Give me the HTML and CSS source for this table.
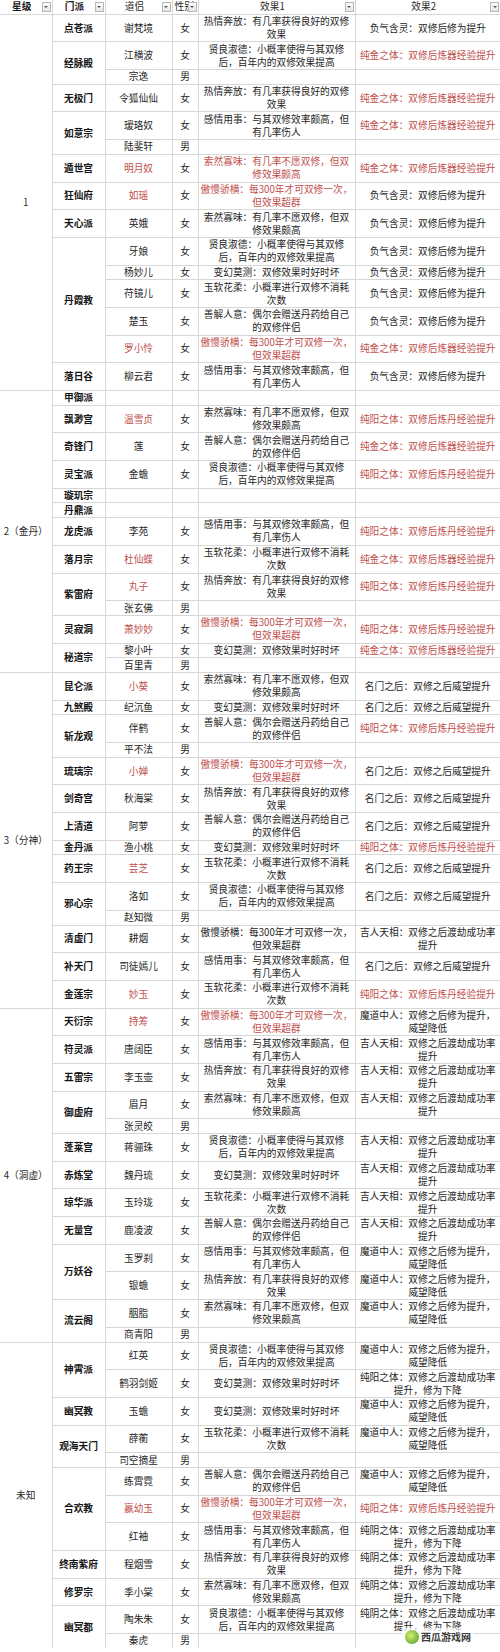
FILE: index.html
```html
<!DOCTYPE html>
<html lang="zh-CN">
<head>
<meta charset="utf-8">
<title>道侣表</title>
<link rel="stylesheet" href="styles.css">
</head>
<body>
<table class="sheet">
<colgroup><col class="c1"><col class="c2"><col class="c3"><col class="c4"><col class="c5"><col class="c6"></colgroup>
<thead>
<tr><th class="b">星级<span class="flt"></span></th><th class="b">门派<span class="flt"></span></th><th>道侣<span class="flt"></span></th><th class="lft">性别<span class="flt"></span></th><th>效果1<span class="flt"></span></th><th>效果2<span class="flt"></span></th></tr>
</thead>
<tbody>
<tr><td class="t" rowspan="15">1</td><td class="s">点苍派</td><td>谢梵境</td><td>女</td><td>热情奔放：有几率获得良好的双修<br>效果</td><td>负气含灵：双修后修为提升</td></tr>
<tr><td class="s" rowspan="2">经脉殿</td><td>江横波</td><td>女</td><td>贤良淑德：小概率使得与其双修<br>后，百年内的双修效果提高</td><td class="r">纯金之体：双修后炼器经验提升</td></tr>
<tr><td>宗逸</td><td>男</td><td></td><td></td></tr>
<tr><td class="s">无极门</td><td>令狐仙仙</td><td>女</td><td>热情奔放：有几率获得良好的双修<br>效果</td><td class="r">纯金之体：双修后炼器经验提升</td></tr>
<tr><td class="s" rowspan="2">如意宗</td><td>瑷珞奴</td><td>女</td><td>感情用事：与其双修效率颇高，但<br>有几率伤人</td><td class="r">纯金之体：双修后炼器经验提升</td></tr>
<tr><td>陆斐轩</td><td>男</td><td></td><td></td></tr>
<tr><td class="s">遁世宫</td><td class="r">明月奴</td><td>女</td><td class="r">索然寡味：有几率不愿双修，但双<br>修效果颇高</td><td class="r">纯金之体：双修后炼器经验提升</td></tr>
<tr><td class="s">狂仙府</td><td class="r">如瑶</td><td>女</td><td class="r">傲慢骄横：每300年才可双修一次，<br>但效果超群</td><td>负气含灵：双修后修为提升</td></tr>
<tr><td class="s">天心派</td><td>英娥</td><td>女</td><td>索然寡味：有几率不愿双修，但双<br>修效果颇高</td><td>负气含灵：双修后修为提升</td></tr>
<tr><td class="s" rowspan="5">丹霞教</td><td>牙娘</td><td>女</td><td>贤良淑德：小概率使得与其双修<br>后，百年内的双修效果提高</td><td>负气含灵：双修后修为提升</td></tr>
<tr><td>杨妙儿</td><td>女</td><td>变幻莫测：双修效果时好时坏</td><td>负气含灵：双修后修为提升</td></tr>
<tr><td>苻镜儿</td><td>女</td><td>玉软花柔：小概率进行双修不消耗<br>次数</td><td>负气含灵：双修后修为提升</td></tr>
<tr><td>楚玉</td><td>女</td><td>善解人意：偶尔会赠送丹药给自己<br>的双修伴侣</td><td>负气含灵：双修后修为提升</td></tr>
<tr><td class="r">罗小怜</td><td>女</td><td class="r">傲慢骄横：每300年才可双修一次，<br>但效果超群</td><td class="r">纯金之体：双修后炼器经验提升</td></tr>
<tr><td class="s">落日谷</td><td>柳云君</td><td>女</td><td>感情用事：与其双修效率颇高，但<br>有几率伤人</td><td>负气含灵：双修后修为提升</td></tr>

<tr><td class="t" rowspan="13">2（金丹）</td><td class="s">甲御派</td><td></td><td></td><td></td><td></td></tr>
<tr><td class="s">飘渺宫</td><td class="r">温雪贞</td><td>女</td><td>索然寡味：有几率不愿双修，但双<br>修效果颇高</td><td class="r">纯阳之体：双修后炼丹经验提升</td></tr>
<tr><td class="s">奇锋门</td><td>莲</td><td>女</td><td>善解人意：偶尔会赠送丹药给自己<br>的双修伴侣</td><td class="r">纯金之体：双修后炼器经验提升</td></tr>
<tr><td class="s">灵宝派</td><td>金蟾</td><td>女</td><td>贤良淑德：小概率使得与其双修<br>后，百年内的双修效果提高</td><td class="r">纯阳之体：双修后炼丹经验提升</td></tr>
<tr><td class="s">璇玑宗</td><td></td><td></td><td></td><td></td></tr>
<tr><td class="s">丹鼎派</td><td></td><td></td><td></td><td></td></tr>
<tr><td class="s">龙虎派</td><td>李苑</td><td>女</td><td>感情用事：与其双修效率颇高，但<br>有几率伤人</td><td class="r">纯阳之体：双修后炼丹经验提升</td></tr>
<tr><td class="s">落月宗</td><td class="r">杜仙蝶</td><td>女</td><td>玉软花柔：小概率进行双修不消耗<br>次数</td><td class="r">纯金之体：双修后炼器经验提升</td></tr>
<tr><td class="s" rowspan="2">紫雷府</td><td class="r">丸子</td><td>女</td><td>热情奔放：有几率获得良好的双修<br>效果</td><td class="r">纯阳之体：双修后炼丹经验提升</td></tr>
<tr><td>张玄佛</td><td>男</td><td></td><td></td></tr>
<tr><td class="s">灵寂洞</td><td class="r">萧妙妙</td><td>女</td><td class="r">傲慢骄横：每300年才可双修一次，<br>但效果超群</td><td class="r">纯阳之体：双修后炼丹经验提升</td></tr>
<tr><td class="s" rowspan="2">秘道宗</td><td>黎小叶</td><td>女</td><td>变幻莫测：双修效果时好时坏</td><td class="r">纯金之体：双修后炼器经验提升</td></tr>
<tr><td>百里青</td><td>男</td><td></td><td></td></tr>

<tr><td class="t" rowspan="14">3（分神）</td><td class="s">昆仑派</td><td class="r">小葵</td><td>女</td><td>索然寡味：有几率不愿双修，但双<br>修效果颇高</td><td>名门之后：双修之后威望提升</td></tr>
<tr><td class="s">九煞殿</td><td>纪沉鱼</td><td>女</td><td>变幻莫测：双修效果时好时坏</td><td>名门之后：双修之后威望提升</td></tr>
<tr><td class="s" rowspan="2">斩龙观</td><td>伴鹤</td><td>女</td><td>善解人意：偶尔会赠送丹药给自己<br>的双修伴侣</td><td class="r">纯阳之体：双修后炼丹经验提升</td></tr>
<tr><td>平不法</td><td>男</td><td></td><td></td></tr>
<tr><td class="s">琉璃宗</td><td class="r">小婵</td><td>女</td><td class="r">傲慢骄横：每300年才可双修一次，<br>但效果超群</td><td>名门之后：双修之后威望提升</td></tr>
<tr><td class="s">剑奇宫</td><td>秋海棠</td><td>女</td><td>热情奔放：有几率获得良好的双修<br>效果</td><td>名门之后：双修之后威望提升</td></tr>
<tr><td class="s">上清道</td><td>阿萝</td><td>女</td><td>善解人意：偶尔会赠送丹药给自己<br>的双修伴侣</td><td>名门之后：双修之后威望提升</td></tr>
<tr><td class="s">金丹派</td><td>渔小桃</td><td>女</td><td>变幻莫测：双修效果时好时坏</td><td class="r">纯阳之体：双修后炼丹经验提升</td></tr>
<tr><td class="s">药王宗</td><td class="r">芸芝</td><td>女</td><td>玉软花柔：小概率进行双修不消耗<br>次数</td><td>名门之后：双修之后威望提升</td></tr>
<tr><td class="s" rowspan="2">邪心宗</td><td>洛如</td><td>女</td><td>贤良淑德：小概率使得与其双修<br>后，百年内的双修效果提高</td><td>名门之后：双修之后威望提升</td></tr>
<tr><td>赵知微</td><td>男</td><td></td><td></td></tr>
<tr><td class="s">清虚门</td><td>耕烟</td><td>女</td><td>傲慢骄横：每300年才可双修一次，<br>但效果超群</td><td>吉人天相：双修之后渡劫成功率<br>提升</td></tr>
<tr><td class="s">补天门</td><td>司徒嫣儿</td><td>女</td><td>感情用事：与其双修效率颇高，但<br>有几率伤人</td><td>名门之后：双修之后威望提升</td></tr>
<tr><td class="s">金莲宗</td><td class="r">妙玉</td><td>女</td><td>玉软花柔：小概率进行双修不消耗<br>次数</td><td class="r">纯阳之体：双修后炼丹经验提升</td></tr>

<tr><td class="t" rowspan="13">4（洞虚）</td><td class="s">天衍宗</td><td class="r">持筹</td><td>女</td><td class="r">傲慢骄横：每300年才可双修一次，<br>但效果超群</td><td>魔道中人：双修之后修为提升，<br>威望降低</td></tr>
<tr><td class="s">符灵派</td><td>唐阔臣</td><td>女</td><td>感情用事：与其双修效率颇高，但<br>有几率伤人</td><td>吉人天相：双修之后渡劫成功率<br>提升</td></tr>
<tr><td class="s">五雷宗</td><td>李玉壶</td><td>女</td><td>热情奔放：有几率获得良好的双修<br>效果</td><td>吉人天相：双修之后渡劫成功率<br>提升</td></tr>
<tr><td class="s" rowspan="2">御虚府</td><td>眉月</td><td>女</td><td>索然寡味：有几率不愿双修，但双<br>修效果颇高</td><td>吉人天相：双修之后渡劫成功率<br>提升</td></tr>
<tr><td>张灵皎</td><td>男</td><td></td><td></td></tr>
<tr><td class="s">蓬莱宫</td><td>蒋骊珠</td><td>女</td><td>贤良淑德：小概率使得与其双修<br>后，百年内的双修效果提高</td><td>吉人天相：双修之后渡劫成功率<br>提升</td></tr>
<tr><td class="s">赤炼堂</td><td>魏丹琉</td><td>女</td><td>变幻莫测：双修效果时好时坏</td><td>吉人天相：双修之后渡劫成功率<br>提升</td></tr>
<tr><td class="s">琼华派</td><td>玉玲珑</td><td>女</td><td>玉软花柔：小概率进行双修不消耗<br>次数</td><td>吉人天相：双修之后渡劫成功率<br>提升</td></tr>
<tr><td class="s">无量宫</td><td>鹿凌波</td><td>女</td><td>善解人意：偶尔会赠送丹药给自己<br>的双修伴侣</td><td>吉人天相：双修之后渡劫成功率<br>提升</td></tr>
<tr><td class="s" rowspan="2">万妖谷</td><td>玉罗刹</td><td>女</td><td>感情用事：与其双修效率颇高，但<br>有几率伤人</td><td>魔道中人：双修之后修为提升，<br>威望降低</td></tr>
<tr><td>银蟾</td><td>女</td><td>热情奔放：有几率获得良好的双修<br>效果</td><td>魔道中人：双修之后修为提升，<br>威望降低</td></tr>
<tr><td class="s" rowspan="2">流云阁</td><td>胭脂</td><td>女</td><td>索然寡味：有几率不愿双修，但双<br>修效果颇高</td><td>魔道中人：双修之后修为提升，<br>威望降低</td></tr>
<tr><td>商青阳</td><td>男</td><td></td><td></td></tr>

<tr><td class="t" rowspan="12">未知</td><td class="s" rowspan="2">神霄派</td><td>红英</td><td>女</td><td>贤良淑德：小概率使得与其双修<br>后，百年内的双修效果提高</td><td>魔道中人：双修之后修为提升，<br>威望降低</td></tr>
<tr><td>鹤羽剑姬</td><td>女</td><td>变幻莫测：双修效果时好时坏</td><td>纯阳之体：双修之后渡劫成功率<br>提升，修为下降</td></tr>
<tr><td class="s">幽冥教</td><td>玉蟾</td><td>女</td><td>变幻莫测：双修效果时好时坏</td><td>魔道中人：双修之后修为提升，<br>威望降低</td></tr>
<tr><td class="s" rowspan="2">观海天门</td><td>薛蘅</td><td>女</td><td>玉软花柔：小概率进行双修不消耗<br>次数</td><td>魔道中人：双修之后修为提升，<br>威望降低</td></tr>
<tr><td>司空摘星</td><td>男</td><td></td><td></td></tr>
<tr><td class="s" rowspan="3">合欢教</td><td>练霄霓</td><td>女</td><td>善解人意：偶尔会赠送丹药给自己<br>的双修伴侣</td><td>魔道中人：双修之后修为提升，<br>威望降低</td></tr>
<tr><td class="r">嬴幼玉</td><td>女</td><td class="r">傲慢骄横：每300年才可双修一次，<br>但效果超群</td><td class="r">纯阳之体：双修后炼丹经验提升</td></tr>
<tr><td>红袖</td><td>女</td><td>感情用事：与其双修效率颇高，但<br>有几率伤人</td><td>纯阴之体：双修之后渡劫成功率<br>提升，修为下降</td></tr>
<tr><td class="s">终南紫府</td><td>程烟雪</td><td>女</td><td>热情奔放：有几率获得良好的双修<br>效果</td><td>纯阴之体：双修之后渡劫成功率<br>提升，修为下降</td></tr>
<tr><td class="s">修罗宗</td><td>季小棠</td><td>女</td><td>索然寡味：有几率不愿双修，但双<br>修效果颇高</td><td>纯阴之体：双修之后渡劫成功率<br>提升，修为下降</td></tr>
<tr><td class="s" rowspan="2">幽冥都</td><td>陶朱朱</td><td>女</td><td>贤良淑德：小概率使得与其双修<br>后，百年内的双修效果提高</td><td>纯阴之体：双修之后渡劫成功率<br>提升，修为下降</td></tr>
<tr><td>秦虎</td><td>男</td><td></td><td></td></tr>
</tbody>
</table>
<div class="mark"><span class="leaf"></span><span class="mark-text">西瓜游戏网</span></div>
</body>
</html>
```

FILE: styles.css
```css
html, body {
  margin: 0;
  padding: 0;
  background: #ffffff;
}

body {
  position: relative;
  width: 500px;
  height: 1652px;
  overflow: hidden;
  font-family: "Noto Sans CJK SC", "Noto Sans", sans-serif;
}

.sheet {
  width: 500px;
  border-collapse: collapse;
  border-style: hidden;
  table-layout: fixed;
  font-size: 9.7px;
  color: #262626;
}

.c1 { width: 52px; }
.c2 { width: 53px; }
.c3 { width: 67px; }
.c4 { width: 26px; }
.c5 { width: 157px; }
.c6 { width: 145px; }

.sheet th,
.sheet td {
  border: 1px solid #d7d7d7;
  padding: 0.35px 1px;
  line-height: 13px;
  text-align: center;
  vertical-align: middle;
  white-space: nowrap;
  overflow: visible;
}

.sheet th {
  position: relative;
  font-weight: normal;
  color: #2a2a2a;
  padding-right: 9px;
}

.sheet th.b {
  font-weight: bold;
  color: #1a1a1a;
}

.sheet th.lft {
  text-align: left;
  padding-left: 2px;
  overflow: hidden;
}

.flt {
  position: absolute;
  right: 1px;
  top: 2px;
  width: 7px;
  height: 8px;
  border: 1px solid #b8b8b8;
  background: linear-gradient(#fbfbfb, #e6e6e6);
}

.flt::after {
  content: "";
  position: absolute;
  left: 1.5px;
  top: 3px;
  border-left: 2px solid transparent;
  border-right: 2px solid transparent;
  border-top: 2px solid #555;
}

.sheet td.s {
  font-weight: bold;
  color: #141414;
}

.sheet td.t {
  color: #2a2a2a;
}

.sheet td.r {
  color: #c0504d;
}

.mark {
  position: absolute;
  left: 402px;
  top: 1628px;
  display: flex;
  align-items: center;
  gap: 2px;
  padding: 1px 3px;
  background: rgba(255, 255, 255, 0.7);
  border-radius: 3px;
}

.leaf {
  width: 14px;
  height: 14px;
  border-radius: 50%;
  background: radial-gradient(circle at 40% 40%, #d8ee6a, #6db33f 70%);
}

.mark-text {
  font-size: 10px;
  font-weight: bold;
  color: #3d3d3d;
  text-shadow: 0 0 2px #fff, 0 0 2px #fff;
}
```
